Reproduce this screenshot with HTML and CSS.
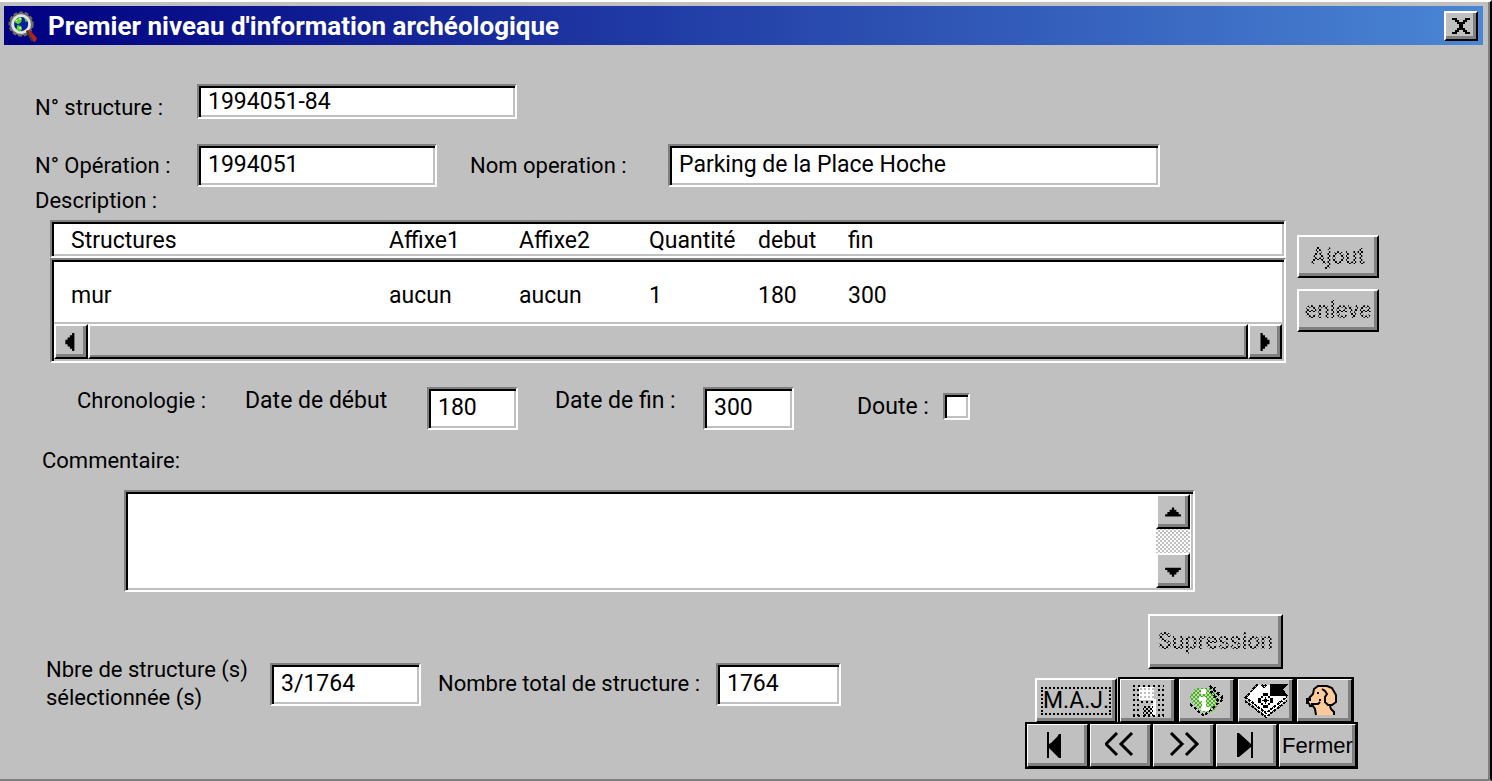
FILE: index.html
```html
<!DOCTYPE html>
<html lang="fr">
<head>
<meta charset="utf-8">
<title>Premier niveau d'information archéologique</title>
<link rel="stylesheet" href="styles.css">
</head>
<body>
<main class="window">
  <header class="titlebar">
    <svg class="titlebar-icon" viewBox="0 0 32 36" aria-hidden="true">
      <circle cx="14" cy="16" r="12" fill="#8a8a80" stroke="#6b6b60" stroke-width="3" stroke-dasharray="4 2"/>
      <circle cx="14" cy="16" r="9" fill="#0a1fa0" stroke="#e4e4e4" stroke-width="3"/>
      <path d="M7 14l4-5 4 1-1 4-3 2zM10 17l4 1 1 4-3 2-3-3zM17 9l4 3-2 2z" fill="#4fd828"/>
      <path d="M8 12h2M12 10h2M12 20h2" stroke="#d8ff80" stroke-width="2"/>
      <path d="M20 23l3-1 8 9-2 4-3-1z" fill="#b32218"/>
      <path d="M20 23l2 4 4 7" stroke="#3c3c30" stroke-width="2" fill="none"/>
    </svg>
    <h1 class="titlebar-text">Premier niveau d'information archéologique</h1>
    <button class="btn close" type="button" aria-label="Fermer la fenêtre">
      <svg viewBox="0 0 18 16" class="close-icon" aria-hidden="true"><path d="M0 0h5v2h2v2h4V2h2V0h5v2h-3v2h-2v2h-2v4h2v2h2v2h3v2h-5v-2h-2v-2H7v2H5v2H0v-2h3v-2h2v-2h2V6H5V4H3V2H0z"/></svg>
    </button>
  </header>

  <form class="content">
    <div class="row row-structure">
      <label class="lead" for="structure">N° structure :</label>
      <input class="field field-structure" id="structure" value="1994051-84">
    </div>
    <div class="row row-operation">
      <label class="lead" for="operation">N° Opération :</label>
      <input class="field field-operation" id="operation" value="1994051">
      <label class="name-label" for="nom">Nom operation :</label>
      <input class="field field-name" id="nom" value="Parking de la Place Hoche">
    </div>
    <h2 class="caption" id="desc">Description :</h2>

    <section class="description">
      <div class="list">
        <table class="grid" aria-labelledby="desc">
          <thead class="grid-head">
            <tr class="grid-row"><th>Structures</th><th>Affixe1</th><th>Affixe2</th><th>Quantité</th><th>debut</th><th>fin</th></tr>
          </thead>
          <tbody class="grid-body">
            <tr class="grid-row"><td>mur</td><td>aucun</td><td>aucun</td><td>1</td><td>180</td><td>300</td></tr>
          </tbody>
        </table>
        <div class="hscroll">
          <button class="btn arrow" type="button" aria-label="Défiler à gauche"><svg class="arrow-icon" viewBox="0 0 16 16" aria-hidden="true"><path d="M11 0v16H9v-2H7v-2H5v-2H3V6h2V4h2V2h2V0z"/></svg></button>
          <div class="thumb"></div>
          <button class="btn arrow" type="button" aria-label="Défiler à droite"><svg class="arrow-icon" viewBox="0 0 16 16" aria-hidden="true"><path d="M4 0v16h2v-2h2v-2h2v-2h2V6h-2V4H8V2H6V0z"/></svg></button>
        </div>
      </div>
      <div class="side">
        <button class="btn side-btn" type="button" disabled><span class="stipple">Ajout</span></button>
        <button class="btn side-btn" type="button" disabled><span class="stipple">enleve</span></button>
      </div>
    </section>

    <div class="row row-dates">
      <span class="chrono">Chronologie :</span>
      <label class="start-label" for="debut">Date de début</label>
      <input class="field field-date" id="debut" value="180">
      <label class="end-label" for="fin">Date de fin :</label>
      <input class="field field-date" id="fin" value="300">
      <div class="doubt">
        <label for="doute">Doute :</label>
        <input class="check" type="checkbox" id="doute">
      </div>
    </div>

    <label class="comment-label" for="commentaire">Commentaire:</label>
    <div class="comment">
      <textarea class="comment-text" id="commentaire"></textarea>
      <div class="vscroll">
        <button class="btn arrow" type="button" aria-label="Défiler vers le haut"><svg class="arrow-icon" viewBox="0 0 16 16" aria-hidden="true"><path d="M7 4h2v2h2v2h2v2h2v2H1v-2h2V8h2V6h2z"/></svg></button>
        <button class="btn arrow" type="button" aria-label="Défiler vers le bas"><svg class="arrow-icon" viewBox="0 0 16 16" aria-hidden="true"><path d="M7 13h2v-2h2V9h2V7h2V5H1v2h2v2h2v2h2z"/></svg></button>
      </div>
    </div>

    <footer class="footer">
      <div class="row totals">
        <label class="selected-label" for="selection">Nbre de structure (s) sélectionnée (s)</label>
        <input class="field field-selected" id="selection" value="3/1764">
        <label class="total-label" for="total">Nombre total de structure :</label>
        <input class="field field-total" id="total" value="1764">
      </div>
      <div class="actions">
        <button class="btn delete" type="button" disabled><span class="stipple">Supression</span></button>
        <div class="tools">
          <button class="btn maj" type="button"><span class="focus">M.A.J.</span></button>
          <button class="btn tool" type="button" aria-label="Enregistrer" disabled>
            <svg class="tool-icon" viewBox="0 0 44 34" shape-rendering="crispEdges" aria-hidden="true">
              <defs><pattern id="dots" width="4" height="4" patternUnits="userSpaceOnUse"><path d="M0 0h2v2H0zM2 2h2v2H2z"/></pattern>
              <pattern id="wdots" width="4" height="4" patternUnits="userSpaceOnUse"><path d="M0 0h2v4H0zM2 2h2v2H2z" fill="#fff"/></pattern></defs>
              <path d="M13 3h15v13H13z" fill="url(#wdots)"/>
              <path d="M27 15h3v17h-5V21h2z" fill="#fff"/>
              <path d="M7 2h31M7 32h31" stroke="#000" stroke-width="2" stroke-dasharray="2 3"/>
              <path d="M8 5v28M12 5v28M37 5v28M33 5v28" stroke="#000" stroke-width="2" stroke-dasharray="2 3"/>
              <path d="M15 18h12" stroke="#000" stroke-width="2" stroke-dasharray="2 3"/>
              <path d="M17 22h10v10H17z" fill="url(#dots)"/>
            </svg>
          </button>
          <button class="btn tool" type="button" aria-label="Information" disabled>
            <svg class="tool-icon" viewBox="0 0 44 34" shape-rendering="crispEdges" aria-hidden="true">
              <defs><pattern id="green" width="4" height="4" patternUnits="userSpaceOnUse"><path d="M0 0h2v2H0zM2 2h2v2H2z" fill="#45b818"/></pattern></defs>
              <path d="M11 5h13l6 6 3 6-4 8-9 4-5-3-7-6-2-6z" fill="#c4d4bc"/>
              <path d="M10 4h14l6 6 4 8-4 8-8 4-6-3-8-7-3-7z" fill="url(#green)"/>
              <path d="M16 5h5v5h-5zM14 13h7v10h4v4h-9v-4h1v-6h-3z" fill="#fff"/>
              <path d="M25 2l13 13M26 2v6l8 9M30 3l-2 5M34 8l-5 6M38 12l-7 6M5 20l14 12L38 15" fill="none" stroke="#000" stroke-width="2" stroke-dasharray="3 2"/>
            </svg>
          </button>
          <button class="btn tool" type="button" aria-label="Carte">
            <svg class="tool-icon" viewBox="0 0 44 34" shape-rendering="crispEdges" aria-hidden="true">
              <path d="M1 14L14 1h13v11h14l2 3-20 18z" fill="#fff"/>
              <path d="M1 14L14 0M1 13l21 16 21-16M1 17l21 16 21-16M18 1l2 2 2-2" fill="none" stroke="#000" stroke-width="2" stroke-dasharray="3 1"/>
              <path d="M26 0h18l-5 5 5 7H26z"/>
              <path d="M19 9h5v3h-5zM19 21h5v3h-5zM14 14h3v5h-3zM26 14h3v5h-3zM17 12h2v2h-2zM24 12h2v2h-2zM17 19h2v2h-2zM24 19h2v2h-2zM20 15h3v3h-3zM18 16h7v1h-7zM21 13h1v7h-1z"/>
            </svg>
          </button>
          <button class="btn tool tool-last" type="button" aria-label="Aide">
            <svg class="tool-icon" viewBox="0 0 44 34" aria-hidden="true">
              <path d="M5 14l4-4 2-5 4-3h9l5 2 4 7v7l-4 4h-2l3 5v4H13l-1-6-2-3H6z" fill="#fbcb98"/>
              <path d="M13 31l-1-6-2-3H7l-1-3M6 14l4-4 1-5 4-3h9l5 2 4 7v7l-4 3h-4l-3-3v-5l2-3-2-3-3-2M27 22l1 3 3 3v3M14 9h2M17 15v2M8 20h7l2-2" fill="none" stroke="#000" stroke-width="2"/>
              <path d="M3 14h5v3H6v3H3z"/>
            </svg>
          </button>
        </div>
        <div class="nav">
          <button class="btn nav-btn" type="button" aria-label="Premier"><svg class="nav-icon" viewBox="0 0 32 28" aria-hidden="true"><path d="M5 0h2v12l2-1 2-2 2-2 2-2 2-3h2v24h-2l-10-10v10H5z"/></svg></button>
          <button class="btn nav-btn" type="button" aria-label="Précédent"><svg class="nav-icon" viewBox="0 0 32 28" aria-hidden="true"><path d="M12 1L1 12l11 11M27 1L16 12l11 11" fill="none" stroke="#000" stroke-width="3"/></svg></button>
          <button class="btn nav-btn" type="button" aria-label="Suivant"><svg class="nav-icon" viewBox="0 0 32 28" aria-hidden="true"><path d="M3 1l11 11L3 23M18 1l11 11-11 11" fill="none" stroke="#000" stroke-width="3"/></svg></button>
          <button class="btn nav-btn" type="button" aria-label="Dernier"><svg class="nav-icon" viewBox="0 0 32 28" aria-hidden="true"><path d="M22 0h-2v12L8 1H6v24h2l12-10v11h2z"/></svg></button>
          <button class="btn quit" type="button">Fermer</button>
        </div>
      </div>
    </footer>
  </form>
</main>
</body>
</html>
```
FILE: styles.css
```css
* { box-sizing: border-box; }
body, input, textarea, button { font-family: Roboto, "Liberation Sans", sans-serif; font-size: 23px; line-height: 28px; color: #000; }
body { margin: 0; background: #c0c0c0; }
h1, h2 { margin: 0; font-size: inherit; font-weight: normal; }

.window { display: flex; flex-direction: column; min-height: 100vh; border-top: 2px solid #fff; border-right: 2px solid #000; border-bottom: 2px solid #808080; box-shadow: inset -2px 0 #808080; }

.titlebar { display: flex; align-items: center; height: 39px; margin: 4px 7px 0 4px; padding: 0 5px 0 4px; background: linear-gradient(90deg, #000080, #4a86d4); }
.titlebar-icon { width: 30px; height: 36px; margin-right: 10px; }
.titlebar-text { flex: 1; color: #fff; font-weight: bold; font-size: 26px; }

.btn { display: flex; align-items: center; justify-content: center; padding: 0; border: 2px solid; border-color: #fff #000 #000 #fff; border-radius: 0; background: #c0c0c0; box-shadow: inset -3px -3px #808080; }
.close { width: 34px; height: 30px; }
.close-icon { width: 18px; height: 16px; }

.content { display: flex; flex-direction: column; flex: 1; }
.row { display: flex; align-items: center; }
.row-structure { align-items: flex-start; height: 38px; margin-top: 39px; padding-left: 35px; }
.row-structure .lead { align-self: flex-end; }
.row-operation { margin-top: 22px; padding-left: 35px; }
.lead, .name-label, .caption, .comment-label, .selected-label, .total-label, .chrono { font-size: 22px; }
.lead { width: 162px; }
.field { min-width: 0; height: 43px; padding: 0 9px 2px; background: #fff; }
.field, .grid-head { border: 2px solid; border-color: #808080 #fff #fff #808080; border-radius: 0; box-shadow: inset 2px 2px #000, inset -2px -2px #c0c0c0; }
.field-structure { width: 320px; height: 35px; padding-bottom: 0; }
.field-operation { width: 240px; }
.name-label { margin-left: 33px; width: 198px; }
.field-name { flex: 1; margin-right: 330px; }
.caption { padding-left: 35px; }

.description { display: flex; gap: 11px; margin-top: 5px; padding: 0 111px 0 50px; }
.list { flex: 1; }
.grid { display: block; }
.grid-head, .grid-body { display: block; background: #fff; }
.grid-head { height: 38px; padding: 5px 19px 0; }
.grid-body { height: 64px; padding: 22px 19px 0; border: 2px solid; border-color: #808080 #fff transparent #808080; border-bottom: 0; box-shadow: inset 2px 2px #000, inset -2px 0 #c0c0c0; }
.grid-row { display: grid; grid-template-columns: 318px 130px 130px 109px 90px 1fr; }
.grid-row th, .grid-row td { padding: 0; text-align: left; font-weight: normal; }
.hscroll { display: flex; height: 41px; padding: 2px; border: 2px solid; border-color: transparent #fff #fff #808080; border-top: 0; background: #c0c0c0; box-shadow: inset 2px 0 #000; }
.thumb { flex: 1; border: 2px solid; border-color: #fff #000 #000 #fff; box-shadow: inset -2px -2px #808080; }
.arrow { width: 34px; height: 35px; flex: none; }
.arrow-icon { width: 18px; height: 18px; }
.side { display: flex; flex-direction: column; gap: 11px; padding-top: 15px; }
.side-btn { width: 82px; height: 43px; }
.stipple { color: transparent; font-weight: 500; background: conic-gradient(#000 25%, transparent 0 50%, #000 0 75%, transparent 0) 0 0 / 4px 4px; -webkit-background-clip: text; background-clip: text; }

.row-dates { align-items: flex-start; margin-top: 24px; padding-left: 77px; }
.chrono { width: 168px; }
.start-label { width: 182px; }
.field-date { width: 91px; }
.end-label { width: 148px; margin-left: 37px; }
.doubt { display: flex; align-items: center; height: 39px; gap: 14px; margin-left: 63px; }
.check { appearance: none; width: 27px; height: 27px; margin: 0; border: 2px solid; border-color: #808080 #fff #fff #808080; background: #fff; box-shadow: inset 2px 2px #000, inset -2px -2px #c0c0c0; }

.comment-label { margin-top: 17px; padding-left: 42px; }
.comment { display: flex; height: 102px; margin: 15px 295px 0 124px; padding: 2px 3px 2px 2px; border: 2px solid; border-color: #808080 #fff #fff #808080; background: #fff; box-shadow: inset 2px 2px #000, inset -2px -2px #c0c0c0; }
.comment-text { flex: 1; border: 0; padding: 4px 8px; resize: none; overflow: hidden; background: transparent; }
.vscroll { display: flex; flex-direction: column; justify-content: space-between; background: conic-gradient(#c0c0c0 25%, #fff 0 50%, #c0c0c0 0 75%, #fff 0) 0 0 / 4px 4px; }

.footer { display: flex; justify-content: space-between; align-items: flex-start; margin-top: 22px; padding: 0 133px 11px 46px; }
.totals { margin-top: 42px; }
.selected-label { width: 224px; }
.field-selected { width: 151px; }
.total-label { width: 278px; margin-left: 17px; }
.field-total { width: 125px; }
.actions { display: flex; flex-direction: column; align-items: flex-end; }
.delete { width: 135px; height: 55px; margin-right: 74px; }
.tools { display: flex; gap: 2px; margin: 9px 4px 0 0; }
.tool { width: 57px; height: 45px; outline: 2px solid #000; outline-offset: -1px; }
.tool-icon { width: 44px; height: 34px; }
.maj { width: 82px; height: 45px; }
.focus { border: 2px dotted #000; line-height: 24px; }
.nav { display: flex; }
.nav-btn { width: 63px; height: 45px; outline: 2px solid #000; outline-offset: -1px; }
.nav-icon { width: 32px; height: 28px; }
.quit { width: 79px; height: 45px; font-family: "Liberation Sans", sans-serif; font-size: 22px; outline: 2px solid #000; outline-offset: -1px; }
```
